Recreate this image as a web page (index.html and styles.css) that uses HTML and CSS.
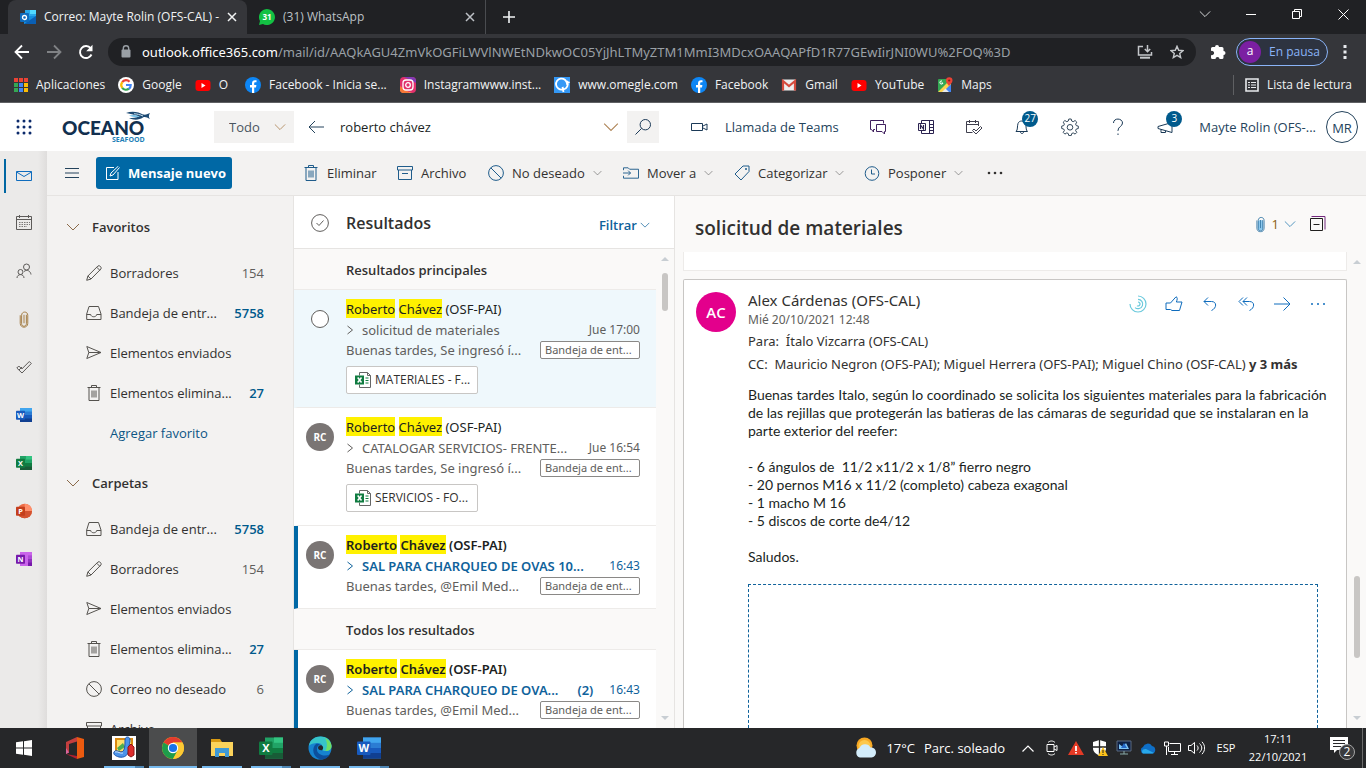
FILE: index.html
```html
<!DOCTYPE html>
<html lang="es">
<head>
<meta charset="utf-8">
<title>Correo: Mayte Rolin (OFS-CAL) - Outlook</title>
<link rel="stylesheet" href="styles.css">
</head>
<body>
<svg class="sprite" aria-hidden="true">
  <symbol id="x" viewBox="0 0 10 10"><path d="M1 1l8 8M9 1l-8 8" fill="none" stroke="currentColor" stroke-width="1.5"/></symbol>
  <symbol id="down" viewBox="0 0 14 8"><path d="M1 1l6 6 6-6" fill="none" stroke="currentColor"/></symbol>
  <symbol id="right" viewBox="0 0 8 10"><path d="M1.500 1l5 4-5 4" fill="none" stroke="currentColor"/></symbol>
  <symbol id="fb" viewBox="0 0 16 16"><circle cx="8" cy="8" r="8" fill="#0d86f5"/><path d="M7 16V10.500H5V8h2V6.300C7 4.300 8.200 3.200 10 3.200l1.500.1v2h-1c-1 0-1.300.5-1.300 1.200V8h2.200l-.4 2.500H9.200V16z" fill="#fff"/></symbol>
  <symbol id="yt" viewBox="0 0 16 16"><rect x="0.500" y="3" width="15" height="11" rx="3" fill="#f00"/><path d="M6.500 6l4 2.500-4 2.500z" fill="#fff"/></symbol>
  <symbol id="pencil" viewBox="0 0 16 16"><path d="M.7 15.300l1.200-4.300L12 .9c1.700-.8 3.800 1.300 3 3L5 14zM1.900 11L5 14M10.700 2.200l3.100 3.100" fill="none" stroke="currentColor"/></symbol>
  <symbol id="inbox" viewBox="0 0 16 16"><path d="M.7 14.500V9L3 1.500h9.500L15 9v5.500zM.7 9.500h4c.3 3 5.700 3 6 0H15" fill="none" stroke="currentColor"/></symbol>
  <symbol id="send" viewBox="0 0 16 16"><path d="M.8 1.500L15 7.500.8 13.500l2-6zM2.800 7.500H15" fill="none" stroke="currentColor"/></symbol>
  <symbol id="trash" viewBox="0 0 16 16"><path d="M1.500 2.500h13M5.500 2.500v-2h5v2M3 2.500v13h10v-13M6 5.500v7M8 5.500v7M10 5.500v7" fill="none" stroke="currentColor"/></symbol>
  <symbol id="block" viewBox="0 0 16 16"><circle cx="8" cy="8" r="7.400" fill="none" stroke="currentColor"/><path d="M2.800 2.800l10.400 10.400" stroke="currentColor"/></symbol>
  <symbol id="archive" viewBox="0 0 16 16"><path d="M.5 1.500h15v3.500H.5zM1.500 5v9.500h13V5M5 8.500h6" fill="none" stroke="currentColor"/></symbol>
  <symbol id="clip" viewBox="0 0 10 18"><path d="M7.500 4v9.500c0 3.500-5 3.500-5 0V4.500c0-4.500 6.500-4.500 6.500 0v8.500c0 5.500-8 5.500-8 0V4.500M5 4v9" fill="none" stroke="currentColor"/></symbol>
  <symbol id="xlfile" viewBox="0 0 16 16"><path d="M4.500 3.500v-3h8l3 3v12h-11v-3M12.500.5v3h3" fill="#fff" stroke="#666"/><path d="M10.500 6h3M10.500 8.500h3M10.500 11h3" stroke="#107c41"/><rect y="3.500" width="9" height="9" fill="#107c41"/><path d="M2.700 5.500l3.800 5M6.500 5.500l-3.800 5" stroke="#fff" stroke-width="1.500"/></symbol>
  <symbol id="word" viewBox="0 0 24 24"><path d="M6 1.500h18v21H6z" fill="#2b7cd3"/><path d="M6 1.500h18v5.300H6z" fill="#41a5ee"/><path d="M6 12h18v5.300H6z" fill="#185abd"/><path d="M6 17h18v5.500H6z" fill="#103f91"/><rect y="5.500" width="13.500" height="13.500" rx="1" fill="#185abd"/><text x="6.800" y="16" class="glyph">W</text></symbol>
  <symbol id="excel" viewBox="0 0 24 24"><path d="M6 1.500h18v21H6z" fill="#21a366"/><path d="M15 1.500h9v5.300h-9z" fill="#33c481"/><path d="M6 12h18v5.300H6z" fill="#107c41"/><path d="M6 17h18v5.500H6z" fill="#185c37"/><rect y="5.500" width="13.500" height="13.500" rx="1" fill="#107c41"/><text x="6.800" y="16" class="glyph">X</text></symbol>
  <symbol id="ppt" viewBox="0 0 24 24"><circle cx="13" cy="12" r="11" fill="#ed6c47"/><path d="M13 1a11 11 0 0 1 11 11H13z" fill="#ff8f6b"/><path d="M24 12a11 11 0 0 1-22 0z" fill="#d35230"/><rect y="5.500" width="13.500" height="13.500" rx="1" fill="#c43e1c"/><text x="6.800" y="16" class="glyph">P</text></symbol>
  <symbol id="onenote" viewBox="0 0 24 24"><path d="M6 1.500h18v21H6z" fill="#ca64ea"/><path d="M18 6.500h6v5.500h-6z" fill="#ae4bd5"/><path d="M18 12h6v5.500h-6z" fill="#9332bf"/><path d="M18 17h6v5.500h-6z" fill="#7719aa"/><rect y="5.500" width="13.500" height="13.500" rx="1" fill="#7719aa"/><text x="6.800" y="16" class="glyph">N</text></symbol>
  <symbol id="up-tri" viewBox="0 0 8 4"><path d="M0 4l4-4 4 4z" fill="#c8ced3"/></symbol>
  <symbol id="down-tri" viewBox="0 0 8 4"><path d="M0 0l4 4 4-4z" fill="#c8ced3"/></symbol>
</svg>

<header class="browser">
  <div class="tabstrip">
    <div class="tab active">
      <svg width="16" height="16" viewBox="0 0 16 16"><path d="M5 1h11v6H5z" fill="#28a8ea"/><path d="M10 1h6v4h-6z" fill="#50d9ff"/><path d="M4 7l12 0v8H4z" fill="#1490df"/><path d="M4 15l12-8v8z" fill="#0a5fb4"/><rect y="4" width="9" height="9" rx="1" fill="#0f6cbd"/><circle cx="4.500" cy="8.500" r="2" fill="none" stroke="#fff" stroke-width="1.300"/></svg>
      <span class="tab-title">Correo: Mayte Rolin (OFS-CAL) -</span>
      <button class="plain" aria-label="Cerrar"><svg width="10" height="10"><use href="#x"/></svg></button>
    </div>
    <div class="tab">
      <svg width="16" height="16" viewBox="0 0 16 16"><path d="M0 16l1-4a8 8 0 1 1 3 3z" fill="#13c143"/><text x="8" y="11" class="glyph tiny">31</text></svg>
      <span class="tab-title">(31) WhatsApp</span>
      <button class="plain" aria-label="Cerrar"><svg width="10" height="10"><use href="#x"/></svg></button>
    </div>
    <button class="plain newtab" aria-label="Nueva pestaña"><svg width="12" height="12" viewBox="0 0 12 12"><path d="M6 0v12M0 6h12" stroke="currentColor" stroke-width="1.600"/></svg></button>
    <div class="winctl">
      <button class="plain" aria-label="Buscar pestañas"><svg width="12" height="8" viewBox="0 0 14 8"><use href="#down"/></svg></button>
      <button class="plain" aria-label="Minimizar"><svg width="10" height="10" viewBox="0 0 10 10"><path d="M0 5.500h10" stroke="#fff"/></svg></button>
      <button class="plain" aria-label="Restaurar"><svg width="10" height="10" viewBox="0 0 10 10"><path d="M.5 2.500h7v7h-7zM2.500 2.500v-2h7v7h-2" fill="none" stroke="#fff"/></svg></button>
      <button class="plain" aria-label="Cerrar ventana"><svg width="11" height="11" viewBox="0 0 11 11"><path d="M.5.5l10 10M10.500.5l-10 10" stroke="#fff"/></svg></button>
    </div>
  </div>
  <div class="navbar">
    <button class="plain nav" aria-label="Atrás"><svg width="16" height="16" viewBox="0 0 16 16"><path d="M15 8H2M8 1.500L1.500 8 8 14.500" fill="none" stroke="#fff" stroke-width="1.800"/></svg></button>
    <button class="plain nav dim" aria-label="Adelante"><svg width="16" height="16" viewBox="0 0 16 16"><path d="M1 8h13M8 1.500L14.500 8 8 14.500" fill="none" stroke="currentColor" stroke-width="1.800"/></svg></button>
    <button class="plain nav" aria-label="Recargar"><svg width="16" height="16" viewBox="0 0 16 16"><path d="M13.500 10.500a6 6 0 1 1-.8-6.200" fill="none" stroke="#fff" stroke-width="1.900"/><path d="M14.500.8v6.400H8.200z" fill="#fff"/></svg></button>
    <div class="omnibox">
      <svg width="10" height="13" viewBox="0 0 10 13"><path d="M2.300 5V3.500a2.700 2.700 0 0 1 5.400 0V5" fill="none" stroke="#9aa0a6" stroke-width="1.400"/><rect x="0.500" y="4.500" width="9" height="8" rx="1" fill="#9aa0a6"/></svg>
      <span class="url"><b>outlook.office365.com</b>/mail/id/AAQkAGU4ZmVkOGFiLWVlNWEtNDkwOC05YjJhLTMyZTM1MmI3MDcxOAAQAPfD1R77GEwIirJNI0WU%2FOQ%3D</span>
      <svg width="16" height="14" viewBox="0 0 16 14"><path d="M6 1.500H1.500v8.500h13V7" fill="none" stroke="#c4c7ca" stroke-width="1.500"/><path d="M3 12.700h10" stroke="#c4c7ca" stroke-width="2"/><path d="M10.500 0v6M7.800 4l2.700 2.700L13.200 4" fill="none" stroke="#c4c7ca" stroke-width="1.500"/></svg>
      <svg width="14" height="14" viewBox="0 0 14 14"><path d="M7 1.300l1.700 4 4.300.3-3.300 2.800 1 4.200L7 10.400l-3.700 2.200 1-4.200L1 5.600l4.300-.3z" fill="none" stroke="#c4c7ca" stroke-width="1.400"/></svg>
    </div>
    <svg class="puzzle" width="15" height="15" viewBox="0 0 15 15"><path d="M0 4.500a1.500 1.500 0 0 1 1.500-1.500H4a2 2 0 1 1 4 0h3a1.500 1.500 0 0 1 1.500 1.500V7a2 2 0 1 1 0 4v2.500A1.500 1.500 0 0 1 11 15H8.500a2 2 0 1 0-4 0h-3A1.500 1.500 0 0 1 0 13.500V11a2.200 2.200 0 1 0 0-4z" fill="#fff"/></svg>
    <button class="profile"><span>a</span>En pausa</button>
    <button class="plain kebab" aria-label="Menú"><svg width="4" height="14" viewBox="0 0 4 14"><path d="M.5 0h3v3h-3zM.5 5.500h3v3h-3zM.5 11h3v3h-3z" fill="#e8eaed"/></svg></button>
  </div>
  <nav class="bookmarks">
    <a href="#"><svg width="14" height="14" viewBox="0 0 14 14"><path d="M0 0h4v4H0zM5 0h4v4H5zM10 0h4v4h-4z" fill="#ea4335"/><path d="M0 5h4v4H0zM0 10h4v4H0z" fill="#34a853"/><path d="M5 5h4v4H5zM5 10h4v4H5z" fill="#4285f4"/><path d="M10 5h4v4h-4zM10 10h4v4h-4z" fill="#fbbc05"/></svg><span>Aplicaciones</span></a>
    <a href="#"><svg width="16" height="16" viewBox="0 0 16 16"><circle cx="8" cy="8" r="8" fill="#fff"/><g fill="none" stroke-width="2.200"><path d="M4.200 5.200A4.700 4.700 0 0 1 11.500 4.700" stroke="#ea4335"/><path d="M4.300 5.100a4.700 4.700 0 0 0 0 5.800" stroke="#fbbc05"/><path d="M4.200 10.800a4.700 4.700 0 0 0 6.800.9" stroke="#34a853"/><path d="M10.900 11.800A4.700 4.700 0 0 0 12.700 8H8" stroke="#4285f4"/></g></svg><span>Google</span></a>
    <a href="#"><svg width="16" height="16"><use href="#yt"/></svg><span>O</span></a>
    <a href="#" class="spaced"><svg width="16" height="16"><use href="#fb"/></svg><span>Facebook - Inicia se...</span></a>
    <a href="#"><svg width="16" height="16" viewBox="0 0 16 16"><rect width="16" height="16" rx="4" fill="#e1306c"/><path d="M0 12L12 16H4a4 4 0 0 1-4-4z" fill="#fcaf45"/><path d="M0 9l10 7H4a4 4 0 0 1-4-4z" fill="#f77737"/><path d="M4 0h8a4 4 0 0 1 4 4v2z" fill="#833ab4"/><rect x="3" y="3" width="10" height="10" rx="3" fill="none" stroke="#fff" stroke-width="1.300"/><circle cx="8" cy="8" r="2.300" fill="none" stroke="#fff" stroke-width="1.300"/></svg><span>Instagramwww.inst...</span></a>
    <a href="#"><svg width="16" height="16" viewBox="0 0 16 16"><rect width="16" height="16" fill="#3498f5"/><path d="M8.500 12.500A5.500 5.500 0 1 1 13 6.500l2.500-1.500M13 4c2 4 0 7.500-3.500 8.500L8.500 10l1 5" fill="none" stroke="#fff" stroke-width="1.800"/></svg><span>www.omegle.com</span></a>
    <a href="#"><svg width="16" height="16"><use href="#fb"/></svg><span>Facebook</span></a>
    <a href="#"><svg width="16" height="16" viewBox="0 0 16 16"><rect x="1" y="2.500" width="14" height="11" rx="1" fill="#eee"/><path d="M2 13.500V4l6 5 6-5v9.500" fill="none" stroke="#d54b3d" stroke-width="2.200"/></svg><span>Gmail</span></a>
    <a href="#"><svg width="16" height="16"><use href="#yt"/></svg><span>YouTube</span></a>
    <a href="#"><svg width="16" height="16" viewBox="0 0 16 16"><rect x="1" y="2" width="13" height="13" rx="1" fill="#34a853"/><path d="M14 7v8H7l-1-3z" fill="#4285f4"/><path d="M1 15L11 5l3 2L6 15z" fill="#fbd34d"/><path d="M5 15l3.500-3.500L12 15z" fill="#e8eaed"/><path d="M12 9c-1-2-3-3-3-5.500a3 3 0 0 1 6.500 0C15.500 6 13 7 12 9z" fill="#ea4335"/><circle cx="12.200" cy="3.500" r="1.100" fill="#8c1b12"/><path d="M5 4a1.600 1.600 0 1 0 1 2H4.500" fill="none" stroke="#fff"/></svg><span>Maps</span></a>
    <a href="#" class="reading-list"><svg width="14" height="14" viewBox="0 0 14 14"><path d="M1 1h12v12H1z" fill="none" stroke="#e8eaed" stroke-width="1.600"/><path d="M3 4.500h2M6 4.500h5M3 7h2M6 7h5M3 9.500h2M6 9.500h5" stroke="#e8eaed" stroke-width="1.200"/></svg><span>Lista de lectura</span></a>
  </nav>
</header>

<div class="outlook">
  <header class="suite">
    <button class="plain waffle" aria-label="Aplicaciones"><svg width="16" height="16" viewBox="0 0 16 16"><g fill="#0b2a6b"><circle cx="2" cy="2" r="1.500"/><circle cx="8" cy="2" r="1.500"/><circle cx="14" cy="2" r="1.500"/><circle cx="2" cy="8" r="1.500"/><circle cx="8" cy="8" r="1.500"/><circle cx="14" cy="8" r="1.500"/><circle cx="2" cy="14" r="1.500"/><circle cx="8" cy="14" r="1.500"/><circle cx="14" cy="14" r="1.500"/></g></svg></button>
    <svg class="logo" width="90" height="32" viewBox="0 0 90 32" role="img" aria-label="Oceano Seafood"><text x="0" y="24" class="logo-main">OCEANO</text><text x="50" y="31" class="logo-sub">SEAFOOD</text><path d="M64 2c6-2.500 13-1 17 1.500 3 .5 5-.5 7-1.500-1.500 2.500-1.500 4 0 6-3-1.500-5-2.500-7-1.500-4 2.500-9 3-14 .5 4 0 7 0 10-1.500C73 4 69 3 64 2z" fill="#1d4a73"/><path d="M67 4.500c4-1 8-.5 11 1-3 1-7 1-11-1z" fill="#79c3e8"/><path d="M72 2.800c3 0 6 .8 9 2.200" fill="none" stroke="#cfe6f4"/></svg>
    <label class="scope"><select aria-label="Ámbito"><option>Todo</option></select><svg width="12" height="8" viewBox="0 0 14 8"><use href="#down"/></svg></label>
    <div class="search">
      <button class="plain" aria-label="Volver"><svg width="16" height="14" viewBox="0 0 16 14"><path d="M16 7H1M7 1L1 7l6 6" fill="none" stroke="#24435c"/></svg></button>
      <input type="text" value="roberto chávez" aria-label="Buscar">
      <svg class="amber" width="16" height="10" viewBox="0 0 14 8"><use href="#down"/></svg>
      <button class="lens" aria-label="Buscar"><svg width="16" height="16" viewBox="0 0 16 16"><circle cx="10.300" cy="5.700" r="5.200" fill="none" stroke="#1b3a57"/><path d="M6.600 9.400L.5 15.500" stroke="#1b3a57"/></svg></button>
    </div>
    <button class="plain teams"><svg width="18" height="12" viewBox="0 0 18 12"><path d="M.5 2.500h11v7H.5zM12 5l4-2v6l-4-2" fill="none" stroke="#1b3a57"/></svg>Llamada de Teams</button>
    <button class="plain sicon" aria-label="Chat"><svg width="18" height="16" viewBox="0 0 18 16"><path d="M6 10.500H4.500v2.500L2.500 10.500H1.500v-9h13V4.500M7.500 5.500h9v7H15.500v2.500L13 12.500H7.500z" fill="none" stroke="#40205e"/></svg></button>
    <button class="plain sicon" aria-label="OneNote"><svg width="18" height="16" viewBox="0 0 18 16"><path d="M4.500 4V1.500h12v13h-12V12M12.500 1.500v13M13 5.500h3.500M13 8.500h3.500M13 11.500h3.500" fill="none" stroke="#2b2350"/><path d="M1.500 4.500h7v7h-7z" fill="#fff" stroke="#2b2350"/><path d="M3.500 10V6l3 4V6" fill="none" stroke="#2b2350" stroke-width="1.200"/></svg></button>
    <button class="plain sicon" aria-label="Mi día"><svg width="18" height="16" viewBox="0 0 18 16"><path d="M7.500 13.500H1.500v-11h12V7M2 5.500h11.500M4.500 1v3M10.500 1v3M7.500 11.500L9 10l2 2 4.500-4.500L17 9l-6 6z" fill="none" stroke="#40404e"/></svg></button>
    <button class="plain sicon" aria-label="Notificaciones"><svg width="18" height="18" viewBox="0 0 18 18"><path d="M3 13.500c2-1.500 1-5 2-8 1-3.300 6.500-3.300 7.500 0 1 3 0 6.500 2 8zM7.500 14c0 2 3 2 3 0" fill="none" stroke="#1b3a57"/></svg><span class="badge">27</span></button>
    <button class="plain sicon" aria-label="Configuración"><svg width="18" height="18" viewBox="0 0 18 18"><path d="M7.800 1h2.400l.5 2 1.500.7 1.900-1.200 1.700 1.700-1.200 1.900.7 1.500 2 .5v2.400l-2 .5-.7 1.500 1.200 1.900-1.700 1.700-1.900-1.200-1.500.7-.5 2H7.800l-.5-2-1.500-.7-1.900 1.200-1.700-1.700 1.200-1.900-.7-1.500-2-.5V8.100l2-.5.7-1.500-1.200-1.900 1.700-1.700 1.900 1.200 1.500-.7z" fill="none" stroke="#33485a"/><circle cx="9" cy="9.300" r="2.800" fill="none" stroke="#33485a"/></svg></button>
    <button class="plain sicon" aria-label="Ayuda"><svg width="12" height="18" viewBox="0 0 12 18"><path d="M1.500 5c0-5.500 9-5 9 0 0 3.500-4.500 3.500-4.500 7.500v.5M6 15.500V17" fill="none" stroke="#1b3a57"/></svg></button>
    <button class="plain sicon" aria-label="Novedades"><svg width="18" height="16" viewBox="0 0 18 16"><path d="M1 7.500v2l14 4V3.500zM4 10.500v3h4.500V12" fill="none" stroke="#1b3a57"/></svg><span class="badge">3</span></button>
    <span class="user">Mayte Rolin (OFS-...</span>
    <span class="me">MR</span>
  </header>

  <div class="work">
    <nav class="rail">
      <a href="#" class="on" aria-label="Correo"><svg width="16" height="16" viewBox="0 0 16 16"><path d="M.5 3.500h15v9H.5zM.5 4L8 8.500 15.500 4" fill="none" stroke="#0f6cbd"/></svg></a>
      <a href="#" aria-label="Calendario"><svg width="16" height="16" viewBox="0 0 16 16"><path d="M.5 1.500h15v13H.5zM.5 4.500h15M3.500 0v3M12.500 0v3" fill="none" stroke="#5d5b59"/><path d="M3 7.500h11M3 9.500h11M3 11.500h8" stroke="#7b7876" stroke-dasharray="1.500 1"/></svg></a>
      <a href="#" aria-label="Personas"><svg width="16" height="16" viewBox="0 0 16 16"><g fill="none" stroke="#5d5b59"><circle cx="10.500" cy="4" r="3"/><circle cx="4.500" cy="9" r="2.500"/><path d="M1 15c0-4.500 7-4.500 7 0M8 8.500c3-2.500 6.500-.5 7 3"/></g></svg></a>
      <a href="#" aria-label="Archivos" class="brown"><svg width="10" height="17"><use href="#clip"/></svg></a>
      <a href="#" aria-label="Tareas"><svg width="16" height="16" viewBox="0 0 16 16"><path d="M.8 9l2-2 3 3 7.500-7.500 2 2L6 14zM3 11l3-3" fill="none" stroke="#5d5b59"/></svg></a>
      <a href="#" aria-label="Word"><svg width="16" height="16"><use href="#word"/></svg></a>
      <a href="#" aria-label="Excel"><svg width="16" height="16"><use href="#excel"/></svg></a>
      <a href="#" aria-label="PowerPoint"><svg width="16" height="16"><use href="#ppt"/></svg></a>
      <a href="#" aria-label="OneNote"><svg width="16" height="16"><use href="#onenote"/></svg></a>
    </nav>
    <div class="main">
      <div class="commands">
        <div class="cmd-left">
          <button class="plain" aria-label="Panel"><svg width="14" height="10" viewBox="0 0 14 10"><path d="M0 .5h14M0 5h14M0 9.500h14" stroke="#24435c"/></svg></button>
          <button class="new"><svg width="14" height="14" viewBox="0 0 14 14"><path d="M8 1.500H.5v12H12V6M4 10l1-3L12.500 0M4 10l3-1 6.500-7.500" fill="none" stroke="#fff"/></svg>Mensaje nuevo</button>
        </div>
        <button class="plain cmd c1"><svg width="16" height="16"><use href="#trash"/></svg>Eliminar</button>
        <button class="plain cmd c2"><svg width="16" height="16"><use href="#archive"/></svg>Archivo</button>
        <button class="plain cmd c3"><svg width="16" height="16"><use href="#block"/></svg>No deseado<svg class="chev" width="9" height="6"><use href="#down"/></svg></button>
        <button class="plain cmd c4"><svg width="16" height="14" viewBox="0 0 17 14"><path d="M.5 4V1.500h5L7 3h9.500v9.500H.5V10M0 7h8M5.500 4.500L8 7 5.500 9.500" fill="none" stroke="currentColor"/></svg>Mover a<svg class="chev" width="9" height="6"><use href="#down"/></svg></button>
        <button class="plain cmd c5"><svg width="16" height="16" viewBox="0 0 16 16"><path d="M1 9L9 1h6v5.500L7 15z" fill="none" stroke="currentColor"/><circle cx="12" cy="4" r="1" fill="currentColor"/></svg>Categorizar<svg class="chev" width="9" height="6"><use href="#down"/></svg></button>
        <button class="plain cmd c6"><svg width="16" height="16" viewBox="0 0 16 16"><circle cx="8" cy="8.500" r="6.800" fill="none" stroke="currentColor"/><path d="M7.500 4.500v4.500H11" fill="none" stroke="currentColor"/></svg>Posponer<svg class="chev" width="9" height="6"><use href="#down"/></svg></button>
        <button class="plain" aria-label="Más"><svg width="16" height="4" viewBox="0 0 16 4"><g fill="#323130"><circle cx="2" cy="2" r="1.300"/><circle cx="8" cy="2" r="1.300"/><circle cx="14" cy="2" r="1.300"/></g></svg></button>
      </div>
      <div class="panes">
        <nav class="folders">
          <h2><svg width="14" height="8"><use href="#down"/></svg>Favoritos</h2>
          <a href="#"><svg width="16" height="16"><use href="#pencil"/></svg><span>Borradores</span><i>154</i></a>
          <a href="#"><svg width="16" height="16"><use href="#inbox"/></svg><span>Bandeja de entr...</span><b>5758</b></a>
          <a href="#"><svg width="16" height="16"><use href="#send"/></svg><span>Elementos enviados</span></a>
          <a href="#"><svg width="16" height="16"><use href="#trash"/></svg><span>Elementos elimina...</span><b>27</b></a>
          <a href="#" class="add">Agregar favorito</a>
          <h2><svg width="14" height="8"><use href="#down"/></svg>Carpetas</h2>
          <a href="#"><svg width="16" height="16"><use href="#inbox"/></svg><span>Bandeja de entr...</span><b>5758</b></a>
          <a href="#"><svg width="16" height="16"><use href="#pencil"/></svg><span>Borradores</span><i>154</i></a>
          <a href="#"><svg width="16" height="16"><use href="#send"/></svg><span>Elementos enviados</span></a>
          <a href="#"><svg width="16" height="16"><use href="#trash"/></svg><span>Elementos elimina...</span><b>27</b></a>
          <a href="#"><svg width="16" height="16"><use href="#block"/></svg><span>Correo no deseado</span><i>6</i></a>
          <a href="#"><svg width="16" height="16"><use href="#archive"/></svg><span>Archivo</span></a>
        </nav>

        <section class="list">
          <div class="list-head">
            <svg width="18" height="18" viewBox="0 0 18 18"><circle cx="9" cy="9" r="8.400" fill="none" stroke="#605e5c"/><path d="M5.500 9l2.500 2.500 4.500-5" fill="none" stroke="#605e5c"/></svg>
            <h2>Resultados</h2>
            <button class="plain filter">Filtrar<svg width="10" height="6" viewBox="0 0 14 8"><use href="#down"/></svg></button>
          </div>
          <div class="list-body">
            <div class="items">
              <h3>Resultados principales</h3>
              <article class="item sel">
                <span class="ring"></span>
                <div class="from"><mark>Roberto</mark> <mark>Chávez</mark> (OSF-PAI)</div>
                <div class="subj"><svg width="8" height="10"><use href="#right"/></svg><span>solicitud de materiales</span><time>Jue 17:00</time></div>
                <div class="prev"><span>Buenas tardes, Se ingresó í...</span><em>Bandeja de ent...</em></div>
                <button class="chip"><svg width="16" height="16"><use href="#xlfile"/></svg>MATERIALES - F...</button>
              </article>
              <article class="item">
                <span class="av">RC</span>
                <div class="from"><mark>Roberto</mark> <mark>Chávez</mark> (OSF-PAI)</div>
                <div class="subj"><svg width="8" height="10"><use href="#right"/></svg><span>CATALOGAR SERVICIOS- FRENTE...</span><time>Jue 16:54</time></div>
                <div class="prev"><span>Buenas tardes, Se ingresó í...</span><em>Bandeja de ent...</em></div>
                <button class="chip"><svg width="16" height="16"><use href="#xlfile"/></svg>SERVICIOS - FO...</button>
              </article>
              <article class="item unread">
                <span class="av">RC</span>
                <div class="from"><mark>Roberto</mark> <mark>Chávez</mark> (OSF-PAI)</div>
                <div class="subj"><svg width="8" height="10"><use href="#right"/></svg><span>SAL PARA CHARQUEO DE OVAS 10...</span><time>16:43</time></div>
                <div class="prev"><span>Buenas tardes, @Emil Med...</span><em>Bandeja de ent...</em></div>
              </article>
              <h3>Todos los resultados</h3>
              <article class="item unread">
                <span class="av">RC</span>
                <div class="from"><mark>Roberto</mark> <mark>Chávez</mark> (OSF-PAI)</div>
                <div class="subj"><svg width="8" height="10"><use href="#right"/></svg><span>SAL PARA CHARQUEO DE OVA...</span><span class="count">(2)</span><time>16:43</time></div>
                <div class="prev"><span>Buenas tardes, @Emil Med...</span><em>Bandeja de ent...</em></div>
              </article>
            </div>
            <div class="scroll"><svg width="8" height="4"><use href="#up-tri"/></svg><i class="thumb"></i><svg class="end" width="8" height="4"><use href="#down-tri"/></svg></div>
          </div>
        </section>

        <section class="reading">
          <div class="read-head">
            <h1>solicitud de materiales</h1>
            <span class="attach"><svg width="9" height="17" viewBox="0 0 10 18"><rect x="2" y="4" width="6" height="12" rx="3" fill="#8cc8ee"/><use href="#clip" width="10" height="18"/></svg><b>1</b><svg class="bluechev" width="12" height="8" viewBox="0 0 14 8"><use href="#down"/></svg></span>
            <svg width="16" height="16" viewBox="0 0 16 16"><path d="M.5 2.500h12v12H.5zM3.500 8.500h6" fill="none" stroke="#201f1e"/><path d="M1.500.5h13.500v13" fill="none" stroke="#73287d"/></svg>
          </div>
          <div class="read-body">
            <div class="thread">
              <div class="prior"></div>
              <article class="mail">
                <span class="big-av">AC</span>
                <div class="content">
                  <div class="top">
                    <div><div class="name">Alex Cárdenas (OFS-CAL)</div><div class="date">Mié 20/10/2021 12:48</div></div>
                    <div class="acts">
                      <svg width="18" height="18" viewBox="0 0 18 18"><g fill="none" stroke="#6bc9dc"><path d="M9 1a8 8 0 1 1-8 8M9 4.300A4.700 4.700 0 1 1 6 12.600M9 7a2 2 0 1 1-1 3.700" stroke-width="1.200"/></g></svg>
                      <button class="plain" aria-label="Me gusta"><svg width="18" height="16" viewBox="0 0 18 16"><path d="M1 7h4.500L11 .8c2 .5 1.200 2.700.4 5.200H17L14.500 14.500H7L5.500 13.500H1z" fill="none" stroke="currentColor"/></svg></button>
                      <button class="plain" aria-label="Responder"><svg width="14" height="14" viewBox="0 0 14 14"><path d="M5 .5L1 4.500l4 4M1 4.500h7.500c5.500 0 5.500 6.500 0 9" fill="none" stroke="currentColor"/></svg></button>
                      <button class="plain" aria-label="Responder a todos"><svg width="17" height="14" viewBox="0 0 17 14"><path d="M5 .5L1 4.500l4 4M9 .5L5 4.500l4 4M5 4.500h6.500c5.500 0 5.500 6.500 0 9" fill="none" stroke="currentColor"/></svg></button>
                      <button class="plain" aria-label="Reenviar"><svg width="17" height="14" viewBox="0 0 17 14"><path d="M0 7h16M9.500.5L16 7l-6.500 6.500" fill="none" stroke="currentColor"/></svg></button>
                      <button class="plain" aria-label="Más acciones"><svg width="16" height="4" viewBox="0 0 16 4"><g fill="currentColor"><circle cx="2" cy="2" r="1"/><circle cx="8" cy="2" r="1"/><circle cx="14" cy="2" r="1"/></g></svg></button>
                    </div>
                  </div>
                  <div class="rcpt">Para:&nbsp; Ítalo Vizcarra (OFS-CAL)</div>
                  <div class="rcpt">CC:&nbsp; Mauricio Negron (OFS-PAI); Miguel Herrera (OFS-PAI); Miguel Chino (OSF-CAL) <b>y 3 más</b></div>
                  <div class="text">
                    <p>Buenas tardes Italo, según lo coordinado se solicita los siguientes materiales para la fabricación<br>de las rejillas que protegerán las batieras de las cámaras de seguridad que se instalaran en la<br>parte exterior del reefer:</p>
                    <p>- 6 ángulos de&nbsp; 11/2 x11/2 x 1/8” fierro negro<br>- 20 pernos M16 x 11/2 (completo) cabeza exagonal<br>- 1 macho M 16<br>- 5 discos de corte de4/12</p>
                    <p>Saludos.</p>
                  </div>
                  <div class="missing"></div>
                </div>
              </article>
            </div>
            <div class="scroll"><svg width="8" height="4"><use href="#up-tri"/></svg><i class="thumb low"></i><svg class="end" width="8" height="4"><use href="#down-tri"/></svg></div>
          </div>
        </section>
      </div>
    </div>
  </div>
</div>

<footer class="taskbar">
  <button class="task start" aria-label="Inicio"><svg width="16" height="16" viewBox="0 0 16 16"><path d="M0 2.300L7 1.300v6.300H0zM8 1.200L16 0v7.600H8zM0 8.500h7v6.300l-7-1zM8 8.500h8V16l-8-1.200z" fill="#fff"/></svg></button>
  <button class="task" aria-label="Office"><svg width="20" height="22" viewBox="0 0 20 22"><path d="M12 0L1 5v12l3-1.500V7l8-2.500z" fill="#c43e3e"/><path d="M1 11v6l3-1.500z" fill="#d665a0"/><path d="M12 0l7 2v18l-7 2z" fill="#eb5a0f"/><path d="M1 17l11 5v-3z" fill="#b1202f"/></svg></button>
  <button class="task run more" aria-label="Aplicación"><svg width="24" height="24" viewBox="0 0 24 24"><path d="M0 0h24v24H0z" fill="#fff"/><path d="M3 2h18v15H3z" fill="#d98a12"/><path d="M5 4h14v11H5z" fill="#ffe06a"/><path d="M5 12l6-5 2 4-6 4z" fill="#4caf50"/><path d="M13 4c0-4 5-4 5 0 0 3-1 4-1 7 0 9-5 11-10 10-4-1-6-3-5-5 2-3 5 0 7 0 4 0 4-7 4-12z" fill="#4b93ea" stroke="#1c55aa"/><path d="M3 16c3-1 5 2 8 1" fill="none" stroke="#cfe6ff"/><path d="M16 11l3-3 3 3v8l-3 2-3-2z" fill="#dd2c2c" stroke="#8e1717"/></svg></button>
  <button class="task run current" aria-label="Chrome"><svg width="22" height="22" viewBox="0 0 22 22"><circle cx="11" cy="11" r="11" fill="#fbc116"/><path d="M11 11L1.500 5.500A11 11 0 0 1 20.500 5.500H11z" fill="#e33b2e"/><path d="M1.500 5.500A11 11 0 0 0 11 22l4.500-8.500L11 11z" fill="#1e9c4b"/><path d="M11 5.500h9.500A11 11 0 0 1 11 22l4.700-8.200z" fill="#fcc934"/><circle cx="11" cy="11" r="5.200" fill="#fff"/><circle cx="11" cy="11" r="4.100" fill="#1a73e8"/></svg></button>
  <button class="task run" aria-label="Explorador"><svg width="22" height="20" viewBox="0 0 22 20"><path d="M0 1h9l2 3H0z" fill="#d99a12"/><path d="M0 4h22v14H0z" fill="#fbd35b"/><path d="M4 19v-9h14v9h-4v-4H8v4z" fill="#3f9ad6"/></svg></button>
  <button class="task run more" aria-label="Excel"><svg width="24" height="24"><use href="#excel"/></svg></button>
  <button class="task run" aria-label="Edge"><svg width="24" height="24" viewBox="0 0 24 24"><circle cx="12" cy="12" r="11.500" fill="#1683cf"/><path d="M1 10C2-2 23-3 23.500 10c0 6-8 6-9.500 3.500 1-2 1-6-4-6.500-4 0-8 1-9 3z" fill="#37c5c9"/><path d="M17 2c4 2 6.500 5 6.500 8 0 4-3 5-6 5 2-4 2-9-.5-13z" fill="#6fdf66"/><path d="M8 8c-5 4-3 14 5 15.500 4 0 7-2 9-5-7 3-14-1-13-6 0-2 1-3 3-4-1-1-3-1-4-.5z" fill="#0c4f9c"/><path d="M10 12c0-3 4-4 5-1 .5 1.500-.5 2-.5 3-2 .5-4 0-4.500-2z" fill="#262729"/></svg></button>
  <button class="task run more" aria-label="Word"><svg width="24" height="24"><use href="#word"/></svg></button>
  <div class="tray">
    <button class="plain weather"><svg width="22" height="22" viewBox="0 0 22 22"><circle cx="9.500" cy="8.500" r="8" fill="#f7a823"/><circle cx="9.500" cy="9" r="6" fill="#fcc84c"/><path d="M5 20.500a5 5 0 0 1-.5-9.500 6 6 0 0 1 11-.5 5 5 0 0 1 1 10z" fill="#d3ecfa"/></svg><span>17°C</span><span>Parc. soleado</span></button>
    <span class="ti"><svg width="12" height="7" viewBox="0 0 12 7"><path d="M.5 6.500L6 1l5.500 5.500" fill="none" stroke="#fff" stroke-width="1.200"/></svg></span>
    <span class="ti"><svg width="12" height="16" viewBox="0 0 12 16"><path d="M1 4.500h7v7H1zM8 7l3-1.500v5L8 9M2 2.500C4 .5 7 .5 9 2.500M2 13.500c2 2 5 2 7 0" fill="none" stroke="#fff"/></svg></span>
    <span class="ti"><svg width="16" height="14" viewBox="0 0 16 14"><path d="M8 0l8 14H0z" fill="#e53a25"/><path d="M8 5v5M8 11v1.500" stroke="#fff" stroke-width="1.800"/></svg></span>
    <span class="ti"><svg width="16" height="16" viewBox="0 0 16 16"><path d="M1 2l6.500-2L14 2v6c0 4-3 6-6.500 7.500C4 14 1 12 1 8z" fill="#fff"/><path d="M7.500 0v15M1 7h13" stroke="#222" stroke-width="1.300"/><path d="M11 7l5 9H6z" fill="#fcc21b"/><path d="M11 10v3M11 14v1" stroke="#222"/></svg></span>
    <span class="ti"><svg width="16" height="16" viewBox="0 0 16 16"><path d="M1 1h14v10H1z" fill="#0c1f44" stroke="#5a6b80"/><path d="M3 9V4l4 3 3-4 3 6z" fill="#7cc3f5"/><path d="M8 3l3 5H5z" fill="#2468c9"/><path d="M4 14h8M8 11v3" stroke="#8aa"/></svg></span>
    <span class="ti"><svg width="16" height="11" viewBox="0 0 16 11"><path d="M3.500 10.500a3.400 3.400 0 0 1-.5-6.500 5 5 0 0 1 9-1 3.900 3.900 0 0 1 .7 7.500z" fill="#0f6fc6"/><path d="M3 10.500C1 9 2 5.500 6 6l8 4a4 4 0 0 1-1.500.5z" fill="#28a8ea"/></svg></span>
    <span class="ti"><svg width="17" height="15" viewBox="0 0 17 15"><path d="M5.500 2.500h11v8h-12V6M10.500 10.500v3M7 13.500h7M.5 1h4v4h-4zM2.500 5v9" fill="none" stroke="#fff"/></svg></span>
    <span class="ti"><svg width="17" height="14" viewBox="0 0 17 14"><path d="M.5 4.500H3L6.500 1.500v11L3 9.500H.5zM9 4.500c1.500 1.500 1.500 3.500 0 5M11.500 2.500c3 3 3 6 0 9M14 .8c3.500 4 3.500 8.400 0 12.400" fill="none" stroke="#fff"/></svg></span>
    <span class="lang">ESP</span>
    <span class="clock">17:11<br>22/10/2021</span>
    <button class="plain notes" aria-label="Notificaciones"><svg width="26" height="24" viewBox="0 0 26 24"><path d="M1 1h18v13H8l-3 3v-3H1z" fill="#fff"/><path d="M4 4.500h12M4 7.500h12M4 10.500h8" stroke="#2a2a2c" stroke-width="1.200"/><circle cx="18" cy="16" r="7.500" fill="#3a3b3d" stroke="#a5a5a5"/><text x="18" y="20" class="glyph num">2</text></svg></button>
  </div>
</footer>
</body>
</html>
```

FILE: styles.css
```css
* { box-sizing: border-box; }
html, body { height: 100%; }
body {
  margin: 0;
  display: flex;
  flex-direction: column;
  overflow: hidden;
  font: 13px/20px "Open Sans", "Noto Sans", sans-serif;
  color: #323130;
  white-space: nowrap;
}
h1, h2, h3, p { margin: 0; }
a { color: inherit; text-decoration: none; }
svg { flex: none; display: block; }
button, input, select { font: inherit; color: inherit; }
.sprite { position: absolute; width: 0; height: 0; }
.plain {
  display: flex;
  align-items: center;
  justify-content: center;
  padding: 0;
  border: 0;
  background: none;
}
.glyph { font: 700 11px "Open Sans", sans-serif; fill: #fff; text-anchor: middle; }
.glyph.tiny { font-size: 8px; }
.glyph.num { font-size: 12px; font-weight: 400; }

/* Browser frame */
.browser { flex: none; background: #35363a; color: #f1f3f4; border-bottom: 1px solid #5f6063; font-size: 12px; }
.tabstrip { display: flex; height: 34px; padding-left: 8px; background: #202124; }
.tab { display: flex; align-items: center; gap: 8px; width: 239px; padding: 0 10px 0 12px; color: #bdc1c6; }
.tab.active { background: #35363a; color: #f1f3f4; border-radius: 8px 8px 0 0; }
.tab + .tab { border-right: 1px solid #4a4c50; }
.tab-title { flex: 1; }
.newtab { width: 46px; }
.winctl { display: flex; height: 28px; margin-left: auto; }
.winctl .plain { width: 46px; }
.navbar { display: flex; align-items: center; height: 35px; padding: 0 11px 0 6px; }
.nav { width: 32px; height: 32px; }
.dim { color: #808285; }
.omnibox { flex: 1; display: flex; align-items: center; gap: 17px; height: 28px; margin-left: 6px; padding: 0 12px 0 13px; border-radius: 14px; background: #202124; }
.url { flex: 1; margin-left: -6px; font-family: "Noto Sans", sans-serif; font-size: 13px; color: #9aa0a6; }
.url b { font-weight: 400; color: #fff; }
.puzzle { margin: 0 10px 0 15px; }
.profile { display: flex; align-items: center; gap: 8px; width: 92px; height: 28px; padding: 0 0 0 2px; border: 1px solid #8ab4f8; border-radius: 14px; background: #2d3340; color: #8ab4f8; }
.profile span { width: 22px; height: 22px; border-radius: 50%; background: #7b1fa2; color: #fff; line-height: 20px; }
.kebab { width: 20px; margin-left: 7px; }
.bookmarks { display: flex; align-items: center; gap: 13px; height: 33px; padding: 0 14px 2px; }
.bookmarks a { display: flex; align-items: center; gap: 8px; }
.bookmarks .spaced { margin-left: 4px; }
.bookmarks .reading-list { margin-left: auto; padding-left: 11px; border-left: 1px solid #5f6063; }

/* Suite header */
.outlook { flex: 1; min-height: 0; display: flex; flex-direction: column; }
.suite { flex: none; display: flex; align-items: center; height: 48px; padding-right: 8px; background: #fff; color: #24435c; }
.waffle { width: 47px; height: 48px; }
.logo { margin-left: 15px; }
.logo-main { font: 900 19px Lato, sans-serif; fill: #12304f; }
.logo-sub { font: 700 7px "Open Sans", sans-serif; fill: #1e7fb8; }
.scope { display: flex; align-items: center; width: 80px; height: 32px; margin-left: 62px; padding: 0 8px 0 15px; background: #f3f2f1; color: #4a5560; }
.scope select { flex: 1; min-width: 0; padding: 0; border: 0; background: none; appearance: none; }
.search { display: flex; align-items: center; flex: 0 1 365px; height: 32px; }
.search > .plain { width: 44px; }
.search input { flex: 1; min-width: 0; padding: 0 2px; border: 0; outline: 0; background: none; color: #201f1e; }
.scope svg, .amber { color: #b0875a; }
.lens { width: 32px; height: 32px; margin-left: 8px; padding: 0 8px; border: 0; background: #f3f2f1; }
.teams { gap: 16px; margin: 0 auto 0 32px; }
.sicon { position: relative; width: 48px; height: 48px; }
.badge { position: absolute; top: 8px; right: 8px; width: 16px; height: 16px; border-radius: 8px; background: #005a8c; color: #fff; font-size: 10px; line-height: 15px; text-align: center; }
.user { margin: 0 10px 0 9px; }
.me { width: 32px; height: 32px; border: 1px solid #24435c; border-radius: 50%; line-height: 32px; text-align: center; }

.work { flex: 1; min-height: 0; display: flex; background: #f3f2f1; }
.rail { flex: none; width: 47px; background: linear-gradient(90deg, #ebeae9 38px, #dfdddc); }
.rail a { display: flex; align-items: center; justify-content: center; height: 48px; }
.rail .on { height: 34px; margin: 8px 0 6px 4px; padding-right: 6px; border-left: 2px solid #0067a3; }
.brown { color: #a0783c; }
.main { flex: 1; min-width: 0; display: flex; flex-direction: column; }

.commands { flex: none; display: flex; align-items: center; height: 45px; border-bottom: 1px solid #e6e4e2; }
.cmd-left { flex: none; display: flex; align-items: center; width: 256px; height: 44px; padding-left: 18px; gap: 17px; }
.new { display: flex; align-items: center; gap: 8px; width: 136px; height: 32px; padding: 0 0 0 10px; border: 0; border-radius: 3px; background: #0068a5; color: #fff; font-weight: 700; }
.cmd { justify-content: flex-start; gap: 8px; color: #323130; }
.cmd svg { color: #1f5c8b; }
.cmd .chev { color: #666; }
.c1 { width: 94px; }
.c2 { width: 91px; }
.c3 { width: 135px; }
.c4 { width: 111px; }
.c5 { width: 130px; }
.c6 { width: 123px; }

.panes { flex: 1; min-height: 0; display: flex; }
.folders { flex: none; width: 246px; padding: 1px 29px 0 0; overflow: hidden; }
.folders h2 { display: flex; align-items: center; gap: 12px; height: 50px; margin-top: 6px; padding: 0 0 2px 19px; font-size: 13px; font-weight: 600; }
.folders h2 svg { color: #8a6a4a; }
.folders a { display: flex; align-items: center; gap: 8px; height: 40px; padding-left: 39px; }
.folders svg { color: #55534f; }
.folders a span { flex: 1; }
.folders b { font-weight: 600; color: #005a8c; }
.folders i { font-style: normal; color: #605e5c; }
.folders .add { padding-left: 63px; color: #0b5584; }

/* Result list */
.list { flex: none; width: 382px; display: flex; flex-direction: column; border: solid #e6e4e2; border-width: 0 1px; background: #faf9f8; }
.list-head { flex: none; display: flex; align-items: center; height: 53px; padding: 1px 24px 0 17px; gap: 17px; border-bottom: 1px solid #e6e4e2; background: #fff; }
.list-head h2 { font-size: 16px; font-weight: 600; flex: 1; }
.filter { gap: 3px; padding-top: 4px; color: #0f629b; font-weight: 600; }
.list-body { flex: 1; min-height: 0; display: flex; }
.items { flex: 1; min-width: 0; overflow: hidden; }
.items h3 { height: 41px; padding: 2px 0 0 52px; border-bottom: 1px solid #edebe9; font-size: 13px; font-weight: 600; line-height: 38px; }
.item { display: grid; grid-template-columns: 28px 1fr; column-gap: 12px; padding: 9px 16px 11px 8px; border-bottom: 1px solid #edebe9; border-left: 4px solid #fff; background: #fff; }
.item.sel { background: #eff8fc; border-left-color: #eff8fc; }
.item.unread { border-left-color: #0068a5; }
.item > * { grid-column: 2; }
.item .av, .item .ring { grid-column: 1; grid-row: 1 / 5; }
.av { width: 28px; height: 28px; margin-top: 6px; border-radius: 50%; background: #7a7574; color: #fff; font-size: 10px; font-weight: 700; line-height: 28px; text-align: center; }
.ring { width: 18px; height: 18px; margin: 11px 5px 0; border: 1px solid #605e5c; border-radius: 50%; background: #fff; }
.from, .subj, .prev { font-family: "Noto Sans", sans-serif; }
.from { height: 21px; line-height: 20px; color: #201f1e; }
mark { background: #fff100; color: inherit; display: inline-block; height: 19px; }
.subj, .prev { display: flex; align-items: center; height: 20px; color: #605e5c; }
.subj span:first-of-type { flex: 1; margin-left: 8px; }
time, em { font-size: 12px; font-style: normal; }
.prev em { width: 100px; height: 18px; margin-left: auto; padding: 0 4px; border: 1px solid #8a8886; border-radius: 2px; background: #fff; font-size: 11px; line-height: 15px; }
.chip { display: flex; align-items: center; gap: 4px; width: 132px; height: 28px; margin: 6px 0 2px; padding: 0 8px; border: 1px solid #c8c6c4; border-radius: 2px; background: #fff; font-size: 12px; }
.unread { padding-bottom: 12px; }
.unread .from { font-weight: 600; }
.unread .subj { color: #0f629b; }
.unread .subj span { font-weight: 600; }
.count { margin-right: 16px; }
.scroll { flex: none; display: flex; flex-direction: column; align-items: center; width: 18px; padding: 8px 0; }
.thumb { width: 6px; height: 38px; margin-top: 12px; border-radius: 3px; background: #c8c6c4; }
.end { margin-top: auto; }

/* Reading pane */
.reading { flex: 1; min-width: 0; display: flex; flex-direction: column; background: #faf9f8; }
.read-head { flex: none; display: flex; align-items: center; gap: 14px; height: 56px; padding: 0 40px 0 20px; }
.read-head h1 { flex: 1; padding-top: 8px; font-size: 19px; line-height: 24px; font-weight: 600; }
.attach { display: flex; align-items: center; gap: 5px; color: #3a7ca8; }
.attach b { font-weight: 400; color: #8a5f10; margin-left: 2px; }
.bluechev { color: #3b87b8; }
.read-body { flex: 1; min-height: 0; display: flex; }
.thread { flex: 1; min-width: 0; display: flex; flex-direction: column; padding: 0 1px 0 8px; overflow: hidden; }
.prior { flex: none; height: 19px; border: 1px solid #edebe9; border-top: 0; background: #fff; }
.mail { flex: 1; display: flex; gap: 12px; margin-top: 8px; padding: 12px 28px 0 12px; border: 1px solid #c8c6c4; border-bottom: 0; border-radius: 2px 2px 0 0; background: #fff; }
.big-av { flex: none; width: 40px; height: 40px; border-radius: 50%; background: #e3008c; color: #fff; font-size: 15px; font-weight: 600; line-height: 40px; text-align: center; }
.content { flex: 1; min-width: 0; display: flex; flex-direction: column; }
.top { display: flex; justify-content: space-between; margin-top: -2px; }
.name, .date, .rcpt { font-family: "Noto Sans", sans-serif; }
.name { font-size: 15px; }
.date { font-size: 12px; color: #605e5c; }
.acts { display: flex; height: 30px; margin-right: -18px; color: #0f6cbd; }
.acts > * { width: 36px; height: 18px; margin-top: 5px; }
.rcpt { height: 23px; line-height: 23px; }
.rcpt b { font-weight: 700; }
.text { padding-top: 10px; font: 14px/18px Lato, sans-serif; color: #201f1e; }
.text p { margin-bottom: 18px; }
.missing { flex: 1; border: 1px dashed #0f629b; border-bottom: 0; }
.thumb.low { height: 82px; margin-top: 312px; }

/* Taskbar */
.taskbar { flex: none; display: flex; gap: 1px; height: 40px; background: #262729; color: #fff; font-size: 12px; }
.task { position: relative; display: flex; align-items: center; justify-content: center; width: 48px; padding: 0; border: 0; background: none; }
.task.start { width: 50px; padding-right: 2px; }
.run::after { content: ""; position: absolute; left: 4px; right: 4px; bottom: 0; height: 2px; background: #76b9ed; }
.run.more::after { background: linear-gradient(90deg, #76b9ed 31px, #4f86b3 31px); }
.run.current { background: #4b4c4d; }
.run.current::after { left: 0; right: 0; }
.tray { display: flex; align-items: center; margin-left: auto; padding-right: 3px; }
.weather { gap: 9px; margin-right: 11px; font-size: 13px; }
.ti { width: 24px; display: flex; justify-content: center; }
.lang { width: 36px; text-align: center; font-size: 11px; }
.clock { width: 68px; margin-right: 9px; line-height: 18px; font-size: 11px; text-align: center; }
.notes { width: 42px; height: 40px; border-right: 1px solid #6b6b6b; }
```
